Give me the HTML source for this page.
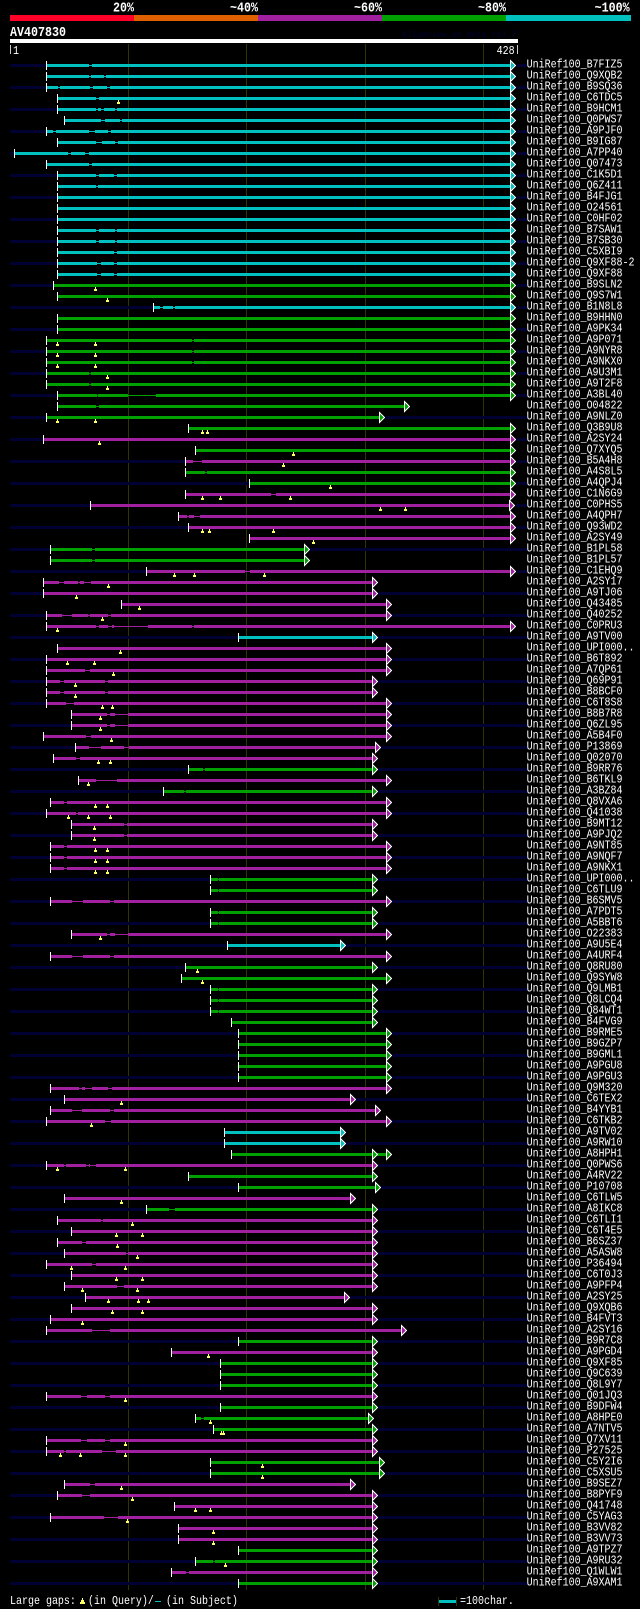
<!DOCTYPE html>
<html><head><meta charset="utf-8"><title>AV407830</title>
<style>
html,body{margin:0;padding:0;background:#000}
svg{display:block}
path{fill:none;stroke-width:3px}
.c{stroke:#00c0c0;color:#00c0c0}
.g{stroke:#00a000;color:#00a000}
.p{stroke:#a020a0;color:#a020a0}
.n{stroke:#003}
.t{stroke-width:1px}
.s{stroke:#fff;stroke-width:1px}
.a{fill:currentColor;stroke:#fff;stroke-width:1px;shape-rendering:crispEdges}
.m{fill:#ff6;stroke:none;shape-rendering:crispEdges}
text{font-family:"Liberation Mono",monospace;fill:#fff;stroke:none;white-space:pre}
.l{font-size:12px;transform:scale(.8333,1) translateY(-1px)}
.h{font-size:13.5px;font-weight:bold;transform:scale(.864,1)}
</style></head><body>
<svg xmlns="http://www.w3.org/2000/svg" width="640" height="1609" viewBox="0 0 640 1609">
<rect x="10" y="15" width="124" height="6" fill="#ff0028"/><rect x="134" y="15" width="124" height="6" fill="#e06000"/><rect x="258" y="15" width="124" height="6" fill="#a020a0"/><rect x="382" y="15" width="124" height="6" fill="#00a000"/><rect x="506" y="15" width="125" height="6" fill="#00c0c0"/>
<text class="h" x="130.8" y="11.7">20%</text><text class="h" x="266.2" y="11.7">~40%</text><text class="h" x="409.7" y="11.7">~60%</text><text class="h" x="553.2" y="11.7">~80%</text><text class="h" x="688.3" y="11.7">~100%</text>
<text class="h" x="11.6" y="36">AV407830</text>
<text x="401.7" y="37" style="font-size:8.33px;fill:#003">AlignView.pm Beta rel.7</text>
<rect x="10" y="39" width="508" height="4" fill="#fff"/>
<rect x="10" y="45" width="1" height="9" fill="#ccc"/><rect x="517" y="45" width="1" height="9" fill="#ccc"/>
<text class="l" x="15.6" y="55">1</text><text class="l" x="596" y="55">428</text>
<rect x="128" y="44" width="1" height="1546" fill="#330"/><rect x="246" y="44" width="1" height="1546" fill="#330"/><rect x="365" y="44" width="1" height="1546" fill="#330"/><rect x="483" y="44" width="1" height="1546" fill="#330"/>

<g class="c" transform="translate(0 65.5)"><path class="n" d="M10 0H46M517 0H527"/><path d="M47 0H89M92 0H510"/><path class="t" d="M89 0H92"/><path class="s" d="M46.5-4.5v9"/><path class="a" d="M510.5-5v10l5-5z"/><text class="l" x="632" y="3">UniRef100_B7FIZ5</text></g>
<g class="c" transform="translate(0 76.5)"><path d="M47 0H89M91 0H104M106 0H510"/><path class="t" d="M89 0H91M104 0H106"/><path class="s" d="M46.5-4.5v9"/><path class="a" d="M510.5-5v10l5-5z"/><text class="l" x="632" y="3">UniRef100_Q9XQB2</text></g>
<g class="c" transform="translate(0 87.5)"><path class="n" d="M10 0H46M517 0H527"/><path d="M47 0H58M60 0H90M93 0H107M110 0H510"/><path class="t" d="M58 0H60M90 0H93M107 0H110"/><path class="s" d="M46.5-4.5v9"/><path class="a" d="M510.5-5v10l5-5z"/><text class="l" x="632" y="3">UniRef100_B9SQ36</text></g>
<g class="c" transform="translate(0 98.5)"><path d="M58 0H96M99 0H510"/><path class="t" d="M96 0H99"/><path class="s" d="M57.5-4.5v9"/><path class="a" d="M510.5-5v10l5-5z"/><path class="m" d="M118 1.5h1v2h1v2h-3v-2h1z"/><text class="l" x="632" y="3">UniRef100_C6TDC5</text></g>
<g class="c" transform="translate(0 109.5)"><path class="n" d="M10 0H57M517 0H527"/><path d="M58 0H96M98 0H101M104 0H115M117 0H510"/><path class="t" d="M96 0H98M101 0H104M115 0H117"/><path class="s" d="M57.5-4.5v9"/><path class="a" d="M510.5-5v10l5-5z"/><text class="l" x="632" y="3">UniRef100_B9HCM1</text></g>
<g class="c" transform="translate(0 120.5)"><path d="M65 0H101M105 0H120M122 0H510"/><path class="t" d="M101 0H105M120 0H122"/><path class="s" d="M64.5-4.5v9"/><path class="a" d="M510.5-5v10l5-5z"/><text class="l" x="632" y="3">UniRef100_Q0PWS7</text></g>
<g class="c" transform="translate(0 131.5)"><path class="n" d="M10 0H46M517 0H527"/><path d="M47 0H53M56 0H89M95 0H108M111 0H510"/><path class="t" d="M53 0H56M89 0H95M108 0H111"/><path class="s" d="M46.5-4.5v9"/><path class="a" d="M510.5-5v10l5-5z"/><text class="l" x="632" y="3">UniRef100_A9PJF0</text></g>
<g class="c" transform="translate(0 142.5)"><path d="M58 0H96M102 0H115M118 0H510"/><path class="t" d="M96 0H102M115 0H118"/><path class="s" d="M57.5-4.5v9"/><path class="a" d="M510.5-5v10l5-5z"/><text class="l" x="632" y="3">UniRef100_B9IG87</text></g>
<g class="c" transform="translate(0 153.5)"><path class="n" d="M10 0H14M517 0H527"/><path d="M15 0H68M71 0H85M89 0H510"/><path class="t" d="M68 0H71M85 0H89"/><path class="s" d="M14.5-4.5v9"/><path class="a" d="M510.5-5v10l5-5z"/><text class="l" x="632" y="3">UniRef100_A7PP40</text></g>
<g class="c" transform="translate(0 164.5)"><path d="M47 0H89M92 0H510"/><path class="t" d="M89 0H92"/><path class="s" d="M46.5-4.5v9"/><path class="a" d="M510.5-5v10l5-5z"/><text class="l" x="632" y="3">UniRef100_Q07473</text></g>
<g class="c" transform="translate(0 175.5)"><path class="n" d="M10 0H57M517 0H527"/><path d="M58 0H96M99 0H114M117 0H510"/><path class="t" d="M96 0H99M114 0H117"/><path class="s" d="M57.5-4.5v9"/><path class="a" d="M510.5-5v10l5-5z"/><text class="l" x="632" y="3">UniRef100_C1K5D1</text></g>
<g class="c" transform="translate(0 186.5)"><path d="M58 0H96M98 0H510"/><path class="t" d="M96 0H98"/><path class="s" d="M57.5-4.5v9"/><path class="a" d="M510.5-5v10l5-5z"/><text class="l" x="632" y="3">UniRef100_Q6Z411</text></g>
<g class="c" transform="translate(0 197.5)"><path class="n" d="M10 0H57M517 0H527"/><path d="M58 0H510"/><path class="s" d="M57.5-4.5v9"/><path class="a" d="M510.5-5v10l5-5z"/><text class="l" x="632" y="3">UniRef100_B4FJG1</text></g>
<g class="c" transform="translate(0 208.5)"><path d="M58 0H510"/><path class="s" d="M57.5-4.5v9"/><path class="a" d="M510.5-5v10l5-5z"/><text class="l" x="632" y="3">UniRef100_O24561</text></g>
<g class="c" transform="translate(0 219.5)"><path class="n" d="M10 0H57M517 0H527"/><path d="M58 0H510"/><path class="s" d="M57.5-4.5v9"/><path class="a" d="M510.5-5v10l5-5z"/><text class="l" x="632" y="3">UniRef100_C0HF02</text></g>
<g class="c" transform="translate(0 230.5)"><path d="M58 0H96M99 0H115M117 0H510"/><path class="t" d="M96 0H99M115 0H117"/><path class="s" d="M57.5-4.5v9"/><path class="a" d="M510.5-5v10l5-5z"/><text class="l" x="632" y="3">UniRef100_B7SAW1</text></g>
<g class="c" transform="translate(0 241.5)"><path class="n" d="M10 0H57M517 0H527"/><path d="M58 0H96M99 0H115M117 0H510"/><path class="t" d="M96 0H99M115 0H117"/><path class="s" d="M57.5-4.5v9"/><path class="a" d="M510.5-5v10l5-5z"/><text class="l" x="632" y="3">UniRef100_B7SB30</text></g>
<g class="c" transform="translate(0 252.5)"><path d="M58 0H114M117 0H510"/><path class="t" d="M114 0H117"/><path class="s" d="M57.5-4.5v9"/><path class="a" d="M510.5-5v10l5-5z"/><text class="l" x="632" y="3">UniRef100_C5XBI9</text></g>
<g class="c" transform="translate(0 263.5)"><path class="n" d="M10 0H57M517 0H527"/><path d="M58 0H97M101 0H114M117 0H510"/><path class="t" d="M97 0H101M114 0H117"/><path class="s" d="M57.5-4.5v9"/><path class="a" d="M510.5-5v10l5-5z"/><text class="l" x="632" y="3">UniRef100_Q9XF88-2</text></g>
<g class="c" transform="translate(0 274.5)"><path d="M58 0H97M101 0H114M117 0H510"/><path class="t" d="M97 0H101M114 0H117"/><path class="s" d="M57.5-4.5v9"/><path class="a" d="M510.5-5v10l5-5z"/><text class="l" x="632" y="3">UniRef100_Q9XF88</text></g>
<g class="g" transform="translate(0 285.5)"><path class="n" d="M10 0H53M517 0H527"/><path d="M54 0H510"/><path class="s" d="M53.5-4.5v9"/><path class="a" d="M510.5-5v10l5-5z"/><path class="m" d="M95 1.5h1v2h1v2h-3v-2h1z"/><text class="l" x="632" y="3">UniRef100_B9SLN2</text></g>
<g class="g" transform="translate(0 296.5)"><path d="M58 0H510"/><path class="s" d="M57.5-4.5v9"/><path class="a" d="M510.5-5v10l5-5z"/><path class="m" d="M107 1.5h1v2h1v2h-3v-2h1z"/><text class="l" x="632" y="3">UniRef100_Q9S7W1</text></g>
<g class="c" transform="translate(0 307.5)"><path class="n" d="M10 0H153M517 0H527"/><path d="M154 0H160M163 0H173M175 0H510"/><path class="t" d="M160 0H163M173 0H175"/><path class="s" d="M153.5-4.5v9"/><path class="a" d="M510.5-5v10l5-5z"/><text class="l" x="632" y="3">UniRef100_B1N8L8</text></g>
<g class="g" transform="translate(0 318.5)"><path d="M58 0H510"/><path class="s" d="M57.5-4.5v9"/><path class="a" d="M510.5-5v10l5-5z"/><text class="l" x="632" y="3">UniRef100_B9HHN0</text></g>
<g class="g" transform="translate(0 329.5)"><path class="n" d="M10 0H57M517 0H527"/><path d="M58 0H510"/><path class="s" d="M57.5-4.5v9"/><path class="a" d="M510.5-5v10l5-5z"/><text class="l" x="632" y="3">UniRef100_A9PK34</text></g>
<g class="g" transform="translate(0 340.5)"><path d="M47 0H192M194 0H510"/><path class="t" d="M192 0H194"/><path class="s" d="M46.5-4.5v9"/><path class="a" d="M510.5-5v10l5-5z"/><path class="m" d="M57 1.5h1v2h1v2h-3v-2h1zM95 1.5h1v2h1v2h-3v-2h1z"/><text class="l" x="632" y="3">UniRef100_A9P071</text></g>
<g class="g" transform="translate(0 351.5)"><path class="n" d="M10 0H46M517 0H527"/><path d="M47 0H192M194 0H510"/><path class="t" d="M192 0H194"/><path class="s" d="M46.5-4.5v9"/><path class="a" d="M510.5-5v10l5-5z"/><path class="m" d="M57 1.5h1v2h1v2h-3v-2h1zM95 1.5h1v2h1v2h-3v-2h1z"/><text class="l" x="632" y="3">UniRef100_A9NYR8</text></g>
<g class="g" transform="translate(0 362.5)"><path d="M47 0H192M194 0H510"/><path class="t" d="M192 0H194"/><path class="s" d="M46.5-4.5v9"/><path class="a" d="M510.5-5v10l5-5z"/><path class="m" d="M57 1.5h1v2h1v2h-3v-2h1zM95 1.5h1v2h1v2h-3v-2h1z"/><text class="l" x="632" y="3">UniRef100_A9NKX0</text></g>
<g class="g" transform="translate(0 373.5)"><path class="n" d="M10 0H46M517 0H527"/><path d="M47 0H89M91 0H510"/><path class="t" d="M89 0H91"/><path class="s" d="M46.5-4.5v9"/><path class="a" d="M510.5-5v10l5-5z"/><path class="m" d="M107 1.5h1v2h1v2h-3v-2h1z"/><text class="l" x="632" y="3">UniRef100_A9U3M1</text></g>
<g class="g" transform="translate(0 384.5)"><path d="M47 0H89M91 0H510"/><path class="t" d="M89 0H91"/><path class="s" d="M46.5-4.5v9"/><path class="a" d="M510.5-5v10l5-5z"/><path class="m" d="M107 1.5h1v2h1v2h-3v-2h1z"/><text class="l" x="632" y="3">UniRef100_A9T2F8</text></g>
<g class="g" transform="translate(0 395.5)"><path class="n" d="M10 0H57M517 0H527"/><path d="M58 0H97M98 0H128M156 0H510"/><path class="t" d="M97 0H98M128 0H156"/><path class="s" d="M57.5-4.5v9"/><path class="a" d="M510.5-5v10l5-5z"/><text class="l" x="632" y="3">UniRef100_A3BL40</text></g>
<g class="g" transform="translate(0 406.5)"><path d="M58 0H96M99 0H404"/><path class="t" d="M96 0H99"/><path class="s" d="M57.5-4.5v9"/><path class="a" d="M404.5-5v10l5-5z"/><text class="l" x="632" y="3">UniRef100_O04822</text></g>
<g class="g" transform="translate(0 417.5)"><path class="n" d="M10 0H46M385 0H527"/><path d="M47 0H379"/><path class="s" d="M46.5-4.5v9"/><path class="a" d="M379.5-5v10l5-5z"/><path class="m" d="M57 1.5h1v2h1v2h-3v-2h1zM95 1.5h1v2h1v2h-3v-2h1z"/><text class="l" x="632" y="3">UniRef100_A9NLZ0</text></g>
<g class="g" transform="translate(0 428.5)"><path d="M189 0H510"/><path class="s" d="M188.5-4.5v9"/><path class="a" d="M510.5-5v10l5-5z"/><path class="m" d="M202 1.5h1v2h1v2h-3v-2h1zM207 1.5h1v2h1v2h-3v-2h1z"/><text class="l" x="632" y="3">UniRef100_Q3B9U8</text></g>
<g class="p" transform="translate(0 439.5)"><path class="n" d="M10 0H43M517 0H527"/><path d="M44 0H510"/><path class="s" d="M43.5-4.5v9"/><path class="a" d="M510.5-5v10l5-5z"/><path class="m" d="M99 1.5h1v2h1v2h-3v-2h1z"/><text class="l" x="632" y="3">UniRef100_A2SY24</text></g>
<g class="g" transform="translate(0 450.5)"><path d="M196 0H510"/><path class="s" d="M195.5-4.5v9"/><path class="a" d="M510.5-5v10l5-5z"/><path class="m" d="M293 1.5h1v2h1v2h-3v-2h1z"/><text class="l" x="632" y="3">UniRef100_Q7XYQ5</text></g>
<g class="p" transform="translate(0 461.5)"><path class="n" d="M10 0H185M517 0H527"/><path d="M186 0H193M202 0H510"/><path class="t" d="M193 0H202"/><path class="s" d="M185.5-4.5v9"/><path class="a" d="M510.5-5v10l5-5z"/><path class="m" d="M283 1.5h1v2h1v2h-3v-2h1z"/><text class="l" x="632" y="3">UniRef100_B5A4H8</text></g>
<g class="g" transform="translate(0 472.5)"><path d="M186 0H205M207 0H510"/><path class="t" d="M205 0H207"/><path class="s" d="M185.5-4.5v9"/><path class="a" d="M510.5-5v10l5-5z"/><text class="l" x="632" y="3">UniRef100_A4S8L5</text></g>
<g class="g" transform="translate(0 483.5)"><path class="n" d="M10 0H249M517 0H527"/><path d="M250 0H510"/><path class="s" d="M249.5-4.5v9"/><path class="a" d="M510.5-5v10l5-5z"/><path class="m" d="M330 1.5h1v2h1v2h-3v-2h1z"/><text class="l" x="632" y="3">UniRef100_A4QPJ4</text></g>
<g class="p" transform="translate(0 494.5)"><path d="M186 0H271M276 0H510"/><path class="t" d="M271 0H276"/><path class="s" d="M185.5-4.5v9"/><path class="a" d="M510.5-5v10l5-5z"/><path class="m" d="M202 1.5h1v2h1v2h-3v-2h1zM220 1.5h1v2h1v2h-3v-2h1zM290 1.5h1v2h1v2h-3v-2h1z"/><text class="l" x="632" y="3">UniRef100_C1N6G9</text></g>
<g class="p" transform="translate(0 505.5)"><path class="n" d="M10 0H90M516 0H527"/><path d="M91 0H509"/><path class="s" d="M90.5-4.5v9"/><path class="a" d="M509.5-5v10l5-5z"/><path class="m" d="M380 1.5h1v2h1v2h-3v-2h1zM405 1.5h1v2h1v2h-3v-2h1z"/><text class="l" x="632" y="3">UniRef100_C0PHS5</text></g>
<g class="p" transform="translate(0 516.5)"><path d="M179 0H187M189 0H194M200 0H510"/><path class="t" d="M187 0H189M194 0H200"/><path class="s" d="M178.5-4.5v9"/><path class="a" d="M510.5-5v10l5-5z"/><text class="l" x="632" y="3">UniRef100_A4QPH7</text></g>
<g class="p" transform="translate(0 527.5)"><path class="n" d="M10 0H188M517 0H527"/><path d="M189 0H510"/><path class="s" d="M188.5-4.5v9"/><path class="a" d="M510.5-5v10l5-5z"/><path class="m" d="M202 1.5h1v2h1v2h-3v-2h1zM209 1.5h1v2h1v2h-3v-2h1zM273 1.5h1v2h1v2h-3v-2h1z"/><text class="l" x="632" y="3">UniRef100_Q93WD2</text></g>
<g class="p" transform="translate(0 538.5)"><path d="M250 0H510"/><path class="s" d="M249.5-4.5v9"/><path class="a" d="M510.5-5v10l5-5z"/><path class="m" d="M313 1.5h1v2h1v2h-3v-2h1z"/><text class="l" x="632" y="3">UniRef100_A2SY49</text></g>
<g class="g" transform="translate(0 549.5)"><path class="n" d="M10 0H50M310 0H527"/><path d="M51 0H92M95 0H304"/><path class="t" d="M92 0H95"/><path class="s" d="M50.5-4.5v9"/><path class="a" d="M304.5-5v10l5-5z"/><text class="l" x="632" y="3">UniRef100_B1PL58</text></g>
<g class="g" transform="translate(0 560.5)"><path d="M51 0H92M95 0H304"/><path class="t" d="M92 0H95"/><path class="s" d="M50.5-4.5v9"/><path class="a" d="M304.5-5v10l5-5z"/><text class="l" x="632" y="3">UniRef100_B1PL57</text></g>
<g class="p" transform="translate(0 571.5)"><path class="n" d="M10 0H146M517 0H527"/><path d="M147 0H245M250 0H510"/><path class="t" d="M245 0H250"/><path class="s" d="M146.5-4.5v9"/><path class="a" d="M510.5-5v10l5-5z"/><path class="m" d="M174 1.5h1v2h1v2h-3v-2h1zM194 1.5h1v2h1v2h-3v-2h1zM264 1.5h1v2h1v2h-3v-2h1z"/><text class="l" x="632" y="3">UniRef100_C1EHQ9</text></g>
<g class="p" transform="translate(0 582.5)"><path d="M44 0H59M64 0H78M80 0H84M91 0H372"/><path class="t" d="M59 0H64M78 0H80M84 0H91"/><path class="s" d="M43.5-4.5v9"/><path class="a" d="M372.5-5v10l5-5z"/><path class="m" d="M108 1.5h1v2h1v2h-3v-2h1z"/><text class="l" x="632" y="3">UniRef100_A2SY17</text></g>
<g class="p" transform="translate(0 593.5)"><path class="n" d="M10 0H43M378 0H527"/><path d="M44 0H372"/><path class="s" d="M43.5-4.5v9"/><path class="a" d="M372.5-5v10l5-5z"/><path class="m" d="M76 1.5h1v2h1v2h-3v-2h1z"/><text class="l" x="632" y="3">UniRef100_A9TJ06</text></g>
<g class="p" transform="translate(0 604.5)"><path d="M122 0H386"/><path class="s" d="M121.5-4.5v9"/><path class="a" d="M386.5-5v10l5-5z"/><path class="m" d="M139 1.5h1v2h1v2h-3v-2h1z"/><text class="l" x="632" y="3">UniRef100_Q43485</text></g>
<g class="p" transform="translate(0 615.5)"><path class="n" d="M10 0H46M392 0H527"/><path d="M47 0H62M72 0H88M90 0H108M111 0H386"/><path class="t" d="M62 0H72M88 0H90M108 0H111"/><path class="s" d="M46.5-4.5v9"/><path class="a" d="M386.5-5v10l5-5z"/><path class="m" d="M102 1.5h1v2h1v2h-3v-2h1z"/><text class="l" x="632" y="3">UniRef100_Q40252</text></g>
<g class="p" transform="translate(0 626.5)"><path d="M47 0H96M99 0H108M112 0H114M148 0H192M194 0H510"/><path class="t" d="M96 0H99M108 0H112M114 0H148M192 0H194"/><path class="s" d="M46.5-4.5v9"/><path class="a" d="M510.5-5v10l5-5z"/><path class="m" d="M57 1.5h1v2h1v2h-3v-2h1z"/><text class="l" x="632" y="3">UniRef100_C0PRU3</text></g>
<g class="c" transform="translate(0 637.5)"><path class="n" d="M10 0H238M378 0H527"/><path d="M239 0H372"/><path class="s" d="M238.5-4.5v9"/><path class="a" d="M372.5-5v10l5-5z"/><text class="l" x="632" y="3">UniRef100_A9TV00</text></g>
<g class="p" transform="translate(0 648.5)"><path d="M58 0H386"/><path class="s" d="M57.5-4.5v9"/><path class="a" d="M386.5-5v10l5-5z"/><path class="m" d="M120 1.5h1v2h1v2h-3v-2h1z"/><text class="l" x="632" y="3">UniRef100_UPI000..</text></g>
<g class="p" transform="translate(0 659.5)"><path class="n" d="M10 0H46M392 0H527"/><path d="M47 0H386"/><path class="s" d="M46.5-4.5v9"/><path class="a" d="M386.5-5v10l5-5z"/><path class="m" d="M67 1.5h1v2h1v2h-3v-2h1zM94 1.5h1v2h1v2h-3v-2h1z"/><text class="l" x="632" y="3">UniRef100_B6T892</text></g>
<g class="p" transform="translate(0 670.5)"><path d="M47 0H85M90 0H386"/><path class="t" d="M85 0H90"/><path class="s" d="M46.5-4.5v9"/><path class="a" d="M386.5-5v10l5-5z"/><path class="m" d="M113 1.5h1v2h1v2h-3v-2h1z"/><text class="l" x="632" y="3">UniRef100_A7QP61</text></g>
<g class="p" transform="translate(0 681.5)"><path class="n" d="M10 0H46M378 0H527"/><path d="M47 0H60M64 0H105M108 0H372"/><path class="t" d="M60 0H64M105 0H108"/><path class="s" d="M46.5-4.5v9"/><path class="a" d="M372.5-5v10l5-5z"/><path class="m" d="M75 1.5h1v2h1v2h-3v-2h1z"/><text class="l" x="632" y="3">UniRef100_Q69P91</text></g>
<g class="p" transform="translate(0 692.5)"><path d="M47 0H60M64 0H105M108 0H372"/><path class="t" d="M60 0H64M105 0H108"/><path class="s" d="M46.5-4.5v9"/><path class="a" d="M372.5-5v10l5-5z"/><path class="m" d="M75 1.5h1v2h1v2h-3v-2h1z"/><text class="l" x="632" y="3">UniRef100_B8BCF0</text></g>
<g class="p" transform="translate(0 703.5)"><path class="n" d="M10 0H46M392 0H527"/><path d="M47 0H66M74 0H386"/><path class="t" d="M66 0H74"/><path class="s" d="M46.5-4.5v9"/><path class="a" d="M386.5-5v10l5-5z"/><path class="m" d="M102 1.5h1v2h1v2h-3v-2h1zM112 1.5h1v2h1v2h-3v-2h1z"/><text class="l" x="632" y="3">UniRef100_C6T8S8</text></g>
<g class="p" transform="translate(0 714.5)"><path d="M72 0H107M110 0H115M128 0H386"/><path class="t" d="M107 0H110M115 0H128"/><path class="s" d="M71.5-4.5v9"/><path class="a" d="M386.5-5v10l5-5z"/><path class="m" d="M100 1.5h1v2h1v2h-3v-2h1z"/><text class="l" x="632" y="3">UniRef100_B8B7R8</text></g>
<g class="p" transform="translate(0 725.5)"><path class="n" d="M10 0H71M392 0H527"/><path d="M72 0H107M110 0H115M128 0H386"/><path class="t" d="M107 0H110M115 0H128"/><path class="s" d="M71.5-4.5v9"/><path class="a" d="M386.5-5v10l5-5z"/><path class="m" d="M100 1.5h1v2h1v2h-3v-2h1z"/><text class="l" x="632" y="3">UniRef100_Q6ZL95</text></g>
<g class="p" transform="translate(0 736.5)"><path d="M44 0H86M91 0H386"/><path class="t" d="M86 0H91"/><path class="s" d="M43.5-4.5v9"/><path class="a" d="M386.5-5v10l5-5z"/><path class="m" d="M111 1.5h1v2h1v2h-3v-2h1z"/><text class="l" x="632" y="3">UniRef100_A5B4F0</text></g>
<g class="p" transform="translate(0 747.5)"><path class="n" d="M10 0H75M381 0H527"/><path d="M76 0H89M101 0H124M129 0H375"/><path class="t" d="M89 0H101M124 0H129"/><path class="s" d="M75.5-4.5v9"/><path class="a" d="M375.5-5v10l5-5z"/><text class="l" x="632" y="3">UniRef100_P13869</text></g>
<g class="p" transform="translate(0 758.5)"><path d="M54 0H76M80 0H372"/><path class="t" d="M76 0H80"/><path class="s" d="M53.5-4.5v9"/><path class="a" d="M372.5-5v10l5-5z"/><path class="m" d="M98 1.5h1v2h1v2h-3v-2h1zM110 1.5h1v2h1v2h-3v-2h1z"/><text class="l" x="632" y="3">UniRef100_Q02070</text></g>
<g class="g" transform="translate(0 769.5)"><path class="n" d="M10 0H188M378 0H527"/><path d="M189 0H203M205 0H372"/><path class="t" d="M203 0H205"/><path class="s" d="M188.5-4.5v9"/><path class="a" d="M372.5-5v10l5-5z"/><text class="l" x="632" y="3">UniRef100_B9RR76</text></g>
<g class="p" transform="translate(0 780.5)"><path d="M79 0H96M117 0H386"/><path class="t" d="M96 0H117"/><path class="s" d="M78.5-4.5v9"/><path class="a" d="M386.5-5v10l5-5z"/><path class="m" d="M88 1.5h1v2h1v2h-3v-2h1z"/><text class="l" x="632" y="3">UniRef100_B6TKL9</text></g>
<g class="g" transform="translate(0 791.5)"><path class="n" d="M10 0H163M378 0H527"/><path d="M164 0H184M186 0H372"/><path class="t" d="M184 0H186"/><path class="s" d="M163.5-4.5v9"/><path class="a" d="M372.5-5v10l5-5z"/><text class="l" x="632" y="3">UniRef100_A3BZ84</text></g>
<g class="p" transform="translate(0 802.5)"><path d="M51 0H64M67 0H386"/><path class="t" d="M64 0H67"/><path class="s" d="M50.5-4.5v9"/><path class="a" d="M386.5-5v10l5-5z"/><path class="m" d="M95 1.5h1v2h1v2h-3v-2h1zM107 1.5h1v2h1v2h-3v-2h1z"/><text class="l" x="632" y="3">UniRef100_Q8VXA6</text></g>
<g class="p" transform="translate(0 813.5)"><path class="n" d="M10 0H46M392 0H527"/><path d="M47 0H76M78 0H386"/><path class="t" d="M76 0H78"/><path class="s" d="M46.5-4.5v9"/><path class="a" d="M386.5-5v10l5-5z"/><path class="m" d="M68 1.5h1v2h1v2h-3v-2h1zM88 1.5h1v2h1v2h-3v-2h1zM110 1.5h1v2h1v2h-3v-2h1z"/><text class="l" x="632" y="3">UniRef100_Q41038</text></g>
<g class="p" transform="translate(0 824.5)"><path d="M72 0H124M127 0H372"/><path class="t" d="M124 0H127"/><path class="s" d="M71.5-4.5v9"/><path class="a" d="M372.5-5v10l5-5z"/><path class="m" d="M94 1.5h1v2h1v2h-3v-2h1z"/><text class="l" x="632" y="3">UniRef100_B9MT12</text></g>
<g class="p" transform="translate(0 835.5)"><path class="n" d="M10 0H71M378 0H527"/><path d="M72 0H124M127 0H372"/><path class="t" d="M124 0H127"/><path class="s" d="M71.5-4.5v9"/><path class="a" d="M372.5-5v10l5-5z"/><path class="m" d="M94 1.5h1v2h1v2h-3v-2h1z"/><text class="l" x="632" y="3">UniRef100_A9PJQ2</text></g>
<g class="p" transform="translate(0 846.5)"><path d="M51 0H64M67 0H386"/><path class="t" d="M64 0H67"/><path class="s" d="M50.5-4.5v9"/><path class="a" d="M386.5-5v10l5-5z"/><path class="m" d="M95 1.5h1v2h1v2h-3v-2h1zM107 1.5h1v2h1v2h-3v-2h1z"/><text class="l" x="632" y="3">UniRef100_A9NT85</text></g>
<g class="p" transform="translate(0 857.5)"><path class="n" d="M10 0H50M392 0H527"/><path d="M51 0H64M67 0H386"/><path class="t" d="M64 0H67"/><path class="s" d="M50.5-4.5v9"/><path class="a" d="M386.5-5v10l5-5z"/><path class="m" d="M95 1.5h1v2h1v2h-3v-2h1zM107 1.5h1v2h1v2h-3v-2h1z"/><text class="l" x="632" y="3">UniRef100_A9NQF7</text></g>
<g class="p" transform="translate(0 868.5)"><path d="M51 0H64M67 0H386"/><path class="t" d="M64 0H67"/><path class="s" d="M50.5-4.5v9"/><path class="a" d="M386.5-5v10l5-5z"/><path class="m" d="M95 1.5h1v2h1v2h-3v-2h1zM107 1.5h1v2h1v2h-3v-2h1z"/><text class="l" x="632" y="3">UniRef100_A9NKX1</text></g>
<g class="g" transform="translate(0 879.5)"><path class="n" d="M10 0H210M378 0H527"/><path d="M211 0H218M219 0H372"/><path class="t" d="M218 0H219"/><path class="s" d="M210.5-4.5v9"/><path class="a" d="M372.5-5v10l5-5z"/><text class="l" x="632" y="3">UniRef100_UPI000..</text></g>
<g class="g" transform="translate(0 890.5)"><path d="M211 0H218M219 0H372"/><path class="t" d="M218 0H219"/><path class="s" d="M210.5-4.5v9"/><path class="a" d="M372.5-5v10l5-5z"/><text class="l" x="632" y="3">UniRef100_C6TLU9</text></g>
<g class="p" transform="translate(0 901.5)"><path class="n" d="M10 0H50M392 0H527"/><path d="M51 0H72M83 0H110M114 0H386"/><path class="t" d="M72 0H83M110 0H114"/><path class="s" d="M50.5-4.5v9"/><path class="a" d="M386.5-5v10l5-5z"/><text class="l" x="632" y="3">UniRef100_B6SMV5</text></g>
<g class="g" transform="translate(0 912.5)"><path d="M211 0H218M219 0H372"/><path class="t" d="M218 0H219"/><path class="s" d="M210.5-4.5v9"/><path class="a" d="M372.5-5v10l5-5z"/><text class="l" x="632" y="3">UniRef100_A7PDT5</text></g>
<g class="g" transform="translate(0 923.5)"><path class="n" d="M10 0H210M378 0H527"/><path d="M211 0H218M219 0H372"/><path class="t" d="M218 0H219"/><path class="s" d="M210.5-4.5v9"/><path class="a" d="M372.5-5v10l5-5z"/><text class="l" x="632" y="3">UniRef100_A5BBT6</text></g>
<g class="p" transform="translate(0 934.5)"><path d="M72 0H107M110 0H115M128 0H386"/><path class="t" d="M107 0H110M115 0H128"/><path class="s" d="M71.5-4.5v9"/><path class="a" d="M386.5-5v10l5-5z"/><path class="m" d="M100 1.5h1v2h1v2h-3v-2h1z"/><text class="l" x="632" y="3">UniRef100_O22383</text></g>
<g class="c" transform="translate(0 945.5)"><path class="n" d="M10 0H227M346 0H527"/><path d="M228 0H340"/><path class="s" d="M227.5-4.5v9"/><path class="a" d="M340.5-5v10l5-5z"/><text class="l" x="632" y="3">UniRef100_A9U5E4</text></g>
<g class="p" transform="translate(0 956.5)"><path d="M51 0H72M83 0H110M114 0H386"/><path class="t" d="M72 0H83M110 0H114"/><path class="s" d="M50.5-4.5v9"/><path class="a" d="M386.5-5v10l5-5z"/><text class="l" x="632" y="3">UniRef100_A4URF4</text></g>
<g class="g" transform="translate(0 967.5)"><path class="n" d="M10 0H185M378 0H527"/><path d="M186 0H372"/><path class="s" d="M185.5-4.5v9"/><path class="a" d="M372.5-5v10l5-5z"/><path class="m" d="M197 1.5h1v2h1v2h-3v-2h1z"/><text class="l" x="632" y="3">UniRef100_Q8RU80</text></g>
<g class="g" transform="translate(0 978.5)"><path d="M182 0H386"/><path class="s" d="M181.5-4.5v9"/><path class="a" d="M386.5-5v10l5-5z"/><path class="m" d="M202 1.5h1v2h1v2h-3v-2h1z"/><text class="l" x="632" y="3">UniRef100_Q9SYW8</text></g>
<g class="g" transform="translate(0 989.5)"><path class="n" d="M10 0H210M378 0H527"/><path d="M211 0H218M219 0H372"/><path class="t" d="M218 0H219"/><path class="s" d="M210.5-4.5v9"/><path class="a" d="M372.5-5v10l5-5z"/><text class="l" x="632" y="3">UniRef100_Q9LMB1</text></g>
<g class="g" transform="translate(0 1000.5)"><path d="M211 0H218M219 0H372"/><path class="t" d="M218 0H219"/><path class="s" d="M210.5-4.5v9"/><path class="a" d="M372.5-5v10l5-5z"/><text class="l" x="632" y="3">UniRef100_Q8LCQ4</text></g>
<g class="g" transform="translate(0 1011.5)"><path class="n" d="M10 0H210M378 0H527"/><path d="M211 0H218M219 0H372"/><path class="t" d="M218 0H219"/><path class="s" d="M210.5-4.5v9"/><path class="a" d="M372.5-5v10l5-5z"/><text class="l" x="632" y="3">UniRef100_Q84WT1</text></g>
<g class="g" transform="translate(0 1022.5)"><path d="M232 0H372"/><path class="s" d="M231.5-4.5v9"/><path class="a" d="M372.5-5v10l5-5z"/><text class="l" x="632" y="3">UniRef100_B4FVG9</text></g>
<g class="g" transform="translate(0 1033.5)"><path class="n" d="M10 0H238M392 0H527"/><path d="M239 0H386"/><path class="s" d="M238.5-4.5v9"/><path class="a" d="M386.5-5v10l5-5z"/><text class="l" x="632" y="3">UniRef100_B9RME5</text></g>
<g class="g" transform="translate(0 1044.5)"><path d="M239 0H386"/><path class="s" d="M238.5-4.5v9"/><path class="a" d="M386.5-5v10l5-5z"/><text class="l" x="632" y="3">UniRef100_B9GZP7</text></g>
<g class="g" transform="translate(0 1055.5)"><path class="n" d="M10 0H238M392 0H527"/><path d="M239 0H386"/><path class="s" d="M238.5-4.5v9"/><path class="a" d="M386.5-5v10l5-5z"/><text class="l" x="632" y="3">UniRef100_B9GML1</text></g>
<g class="g" transform="translate(0 1066.5)"><path d="M239 0H386"/><path class="s" d="M238.5-4.5v9"/><path class="a" d="M386.5-5v10l5-5z"/><text class="l" x="632" y="3">UniRef100_A9PGU8</text></g>
<g class="g" transform="translate(0 1077.5)"><path class="n" d="M10 0H238M392 0H527"/><path d="M239 0H386"/><path class="s" d="M238.5-4.5v9"/><path class="a" d="M386.5-5v10l5-5z"/><text class="l" x="632" y="3">UniRef100_A9PGU3</text></g>
<g class="p" transform="translate(0 1088.5)"><path d="M51 0H79M82 0H85M92 0H108M112 0H386"/><path class="t" d="M79 0H82M85 0H92M108 0H112"/><path class="s" d="M50.5-4.5v9"/><path class="a" d="M386.5-5v10l5-5z"/><text class="l" x="632" y="3">UniRef100_Q9M320</text></g>
<g class="p" transform="translate(0 1099.5)"><path class="n" d="M10 0H64M356 0H527"/><path d="M65 0H350"/><path class="s" d="M64.5-4.5v9"/><path class="a" d="M350.5-5v10l5-5z"/><path class="m" d="M121 1.5h1v2h1v2h-3v-2h1z"/><text class="l" x="632" y="3">UniRef100_C6TEX2</text></g>
<g class="p" transform="translate(0 1110.5)"><path d="M51 0H72M82 0H110M114 0H375"/><path class="t" d="M72 0H82M110 0H114"/><path class="s" d="M50.5-4.5v9"/><path class="a" d="M375.5-5v10l5-5z"/><text class="l" x="632" y="3">UniRef100_B4YYB1</text></g>
<g class="p" transform="translate(0 1121.5)"><path class="n" d="M10 0H46M392 0H527"/><path d="M47 0H105M111 0H386"/><path class="t" d="M105 0H111"/><path class="s" d="M46.5-4.5v9"/><path class="a" d="M386.5-5v10l5-5z"/><path class="m" d="M91 1.5h1v2h1v2h-3v-2h1z"/><text class="l" x="632" y="3">UniRef100_C6TKB2</text></g>
<g class="c" transform="translate(0 1132.5)"><path d="M225 0H340"/><path class="s" d="M224.5-4.5v9"/><path class="a" d="M340.5-5v10l5-5z"/><text class="l" x="632" y="3">UniRef100_A9TV02</text></g>
<g class="c" transform="translate(0 1143.5)"><path class="n" d="M10 0H224M346 0H527"/><path d="M225 0H340"/><path class="s" d="M224.5-4.5v9"/><path class="a" d="M340.5-5v10l5-5z"/><text class="l" x="632" y="3">UniRef100_A9RW10</text></g>
<g class="g" transform="translate(0 1154.5)"><path d="M232 0H386"/><path class="s" d="M231.5-4.5v9"/><path class="a" d="M372.5-5v10l5-5z"/><path class="a" d="M386.5-5v10l5-5z"/><text class="l" x="632" y="3">UniRef100_A8HPH1</text></g>
<g class="p" transform="translate(0 1165.5)"><path class="n" d="M10 0H46M378 0H527"/><path d="M47 0H64M66 0H86M89 0H90M96 0H372"/><path class="t" d="M64 0H66M86 0H96"/><path class="s" d="M46.5-4.5v9"/><path class="a" d="M372.5-5v10l5-5z"/><path class="m" d="M57 1.5h1v2h1v2h-3v-2h1zM125 1.5h1v2h1v2h-3v-2h1z"/><text class="l" x="632" y="3">UniRef100_Q0PWS6</text></g>
<g class="g" transform="translate(0 1176.5)"><path d="M189 0H372"/><path class="s" d="M188.5-4.5v9"/><path class="a" d="M372.5-5v10l5-5z"/><text class="l" x="632" y="3">UniRef100_A4RV22</text></g>
<g class="g" transform="translate(0 1187.5)"><path class="n" d="M10 0H238M381 0H527"/><path d="M239 0H375"/><path class="s" d="M238.5-4.5v9"/><path class="a" d="M375.5-5v10l5-5z"/><text class="l" x="632" y="3">UniRef100_P10708</text></g>
<g class="p" transform="translate(0 1198.5)"><path d="M65 0H350"/><path class="s" d="M64.5-4.5v9"/><path class="a" d="M350.5-5v10l5-5z"/><path class="m" d="M121 1.5h1v2h1v2h-3v-2h1z"/><text class="l" x="632" y="3">UniRef100_C6TLW5</text></g>
<g class="g" transform="translate(0 1209.5)"><path class="n" d="M10 0H146M378 0H527"/><path d="M147 0H169M175 0H372"/><path class="t" d="M169 0H175"/><path class="s" d="M146.5-4.5v9"/><path class="a" d="M372.5-5v10l5-5z"/><text class="l" x="632" y="3">UniRef100_A8IKC8</text></g>
<g class="p" transform="translate(0 1220.5)"><path d="M58 0H101M103 0H372"/><path class="t" d="M101 0H103"/><path class="s" d="M57.5-4.5v9"/><path class="a" d="M372.5-5v10l5-5z"/><path class="m" d="M132 1.5h1v2h1v2h-3v-2h1z"/><text class="l" x="632" y="3">UniRef100_C6TLI1</text></g>
<g class="p" transform="translate(0 1231.5)"><path class="n" d="M10 0H71M378 0H527"/><path d="M72 0H372"/><path class="s" d="M71.5-4.5v9"/><path class="a" d="M372.5-5v10l5-5z"/><path class="m" d="M116 1.5h1v2h1v2h-3v-2h1zM142 1.5h1v2h1v2h-3v-2h1z"/><text class="l" x="632" y="3">UniRef100_C6T4E5</text></g>
<g class="p" transform="translate(0 1242.5)"><path d="M58 0H82M86 0H372"/><path class="t" d="M82 0H86"/><path class="s" d="M57.5-4.5v9"/><path class="a" d="M372.5-5v10l5-5z"/><path class="m" d="M117 1.5h1v2h1v2h-3v-2h1z"/><text class="l" x="632" y="3">UniRef100_B6SZ37</text></g>
<g class="p" transform="translate(0 1253.5)"><path class="n" d="M10 0H64M378 0H527"/><path d="M65 0H126M128 0H372"/><path class="t" d="M126 0H128"/><path class="s" d="M64.5-4.5v9"/><path class="a" d="M372.5-5v10l5-5z"/><path class="m" d="M137 1.5h1v2h1v2h-3v-2h1z"/><text class="l" x="632" y="3">UniRef100_A5ASW8</text></g>
<g class="p" transform="translate(0 1264.5)"><path d="M47 0H92M96 0H372"/><path class="t" d="M92 0H96"/><path class="s" d="M46.5-4.5v9"/><path class="a" d="M372.5-5v10l5-5z"/><path class="m" d="M71 1.5h1v2h1v2h-3v-2h1zM125 1.5h1v2h1v2h-3v-2h1z"/><text class="l" x="632" y="3">UniRef100_P36494</text></g>
<g class="p" transform="translate(0 1275.5)"><path class="n" d="M10 0H71M378 0H527"/><path d="M72 0H372"/><path class="s" d="M71.5-4.5v9"/><path class="a" d="M372.5-5v10l5-5z"/><path class="m" d="M116 1.5h1v2h1v2h-3v-2h1zM142 1.5h1v2h1v2h-3v-2h1z"/><text class="l" x="632" y="3">UniRef100_C6T0J3</text></g>
<g class="p" transform="translate(0 1286.5)"><path d="M65 0H117M124 0H372"/><path class="t" d="M117 0H124"/><path class="s" d="M64.5-4.5v9"/><path class="a" d="M372.5-5v10l5-5z"/><path class="m" d="M82 1.5h1v2h1v2h-3v-2h1zM137 1.5h1v2h1v2h-3v-2h1z"/><text class="l" x="632" y="3">UniRef100_A9PFP4</text></g>
<g class="p" transform="translate(0 1297.5)"><path class="n" d="M10 0H85M350 0H527"/><path d="M86 0H344"/><path class="s" d="M85.5-4.5v9"/><path class="a" d="M344.5-5v10l5-5z"/><path class="m" d="M108 1.5h1v2h1v2h-3v-2h1zM138 1.5h1v2h1v2h-3v-2h1zM148 1.5h1v2h1v2h-3v-2h1z"/><text class="l" x="632" y="3">UniRef100_A2SY25</text></g>
<g class="p" transform="translate(0 1308.5)"><path d="M72 0H372"/><path class="s" d="M71.5-4.5v9"/><path class="a" d="M372.5-5v10l5-5z"/><path class="m" d="M112 1.5h1v2h1v2h-3v-2h1zM142 1.5h1v2h1v2h-3v-2h1z"/><text class="l" x="632" y="3">UniRef100_Q9XQB6</text></g>
<g class="p" transform="translate(0 1319.5)"><path class="n" d="M10 0H50M378 0H527"/><path d="M51 0H372"/><path class="s" d="M50.5-4.5v9"/><path class="a" d="M372.5-5v10l5-5z"/><path class="m" d="M82 1.5h1v2h1v2h-3v-2h1z"/><text class="l" x="632" y="3">UniRef100_B4FVT3</text></g>
<g class="p" transform="translate(0 1330.5)"><path d="M47 0H92M110 0H401"/><path class="t" d="M92 0H110"/><path class="s" d="M46.5-4.5v9"/><path class="a" d="M401.5-5v10l5-5z"/><text class="l" x="632" y="3">UniRef100_A2SY16</text></g>
<g class="g" transform="translate(0 1341.5)"><path class="n" d="M10 0H238M378 0H527"/><path d="M239 0H372"/><path class="s" d="M238.5-4.5v9"/><path class="a" d="M372.5-5v10l5-5z"/><text class="l" x="632" y="3">UniRef100_B9R7C8</text></g>
<g class="p" transform="translate(0 1352.5)"><path d="M172 0H372"/><path class="s" d="M171.5-4.5v9"/><path class="a" d="M372.5-5v10l5-5z"/><path class="m" d="M208 1.5h1v2h1v2h-3v-2h1z"/><text class="l" x="632" y="3">UniRef100_A9PGD4</text></g>
<g class="g" transform="translate(0 1363.5)"><path class="n" d="M10 0H220M378 0H527"/><path d="M221 0H372"/><path class="s" d="M220.5-4.5v9"/><path class="a" d="M372.5-5v10l5-5z"/><text class="l" x="632" y="3">UniRef100_Q9XF85</text></g>
<g class="g" transform="translate(0 1374.5)"><path d="M221 0H372"/><path class="s" d="M220.5-4.5v9"/><path class="a" d="M372.5-5v10l5-5z"/><text class="l" x="632" y="3">UniRef100_Q9C639</text></g>
<g class="g" transform="translate(0 1385.5)"><path class="n" d="M10 0H220M378 0H527"/><path d="M221 0H372"/><path class="s" d="M220.5-4.5v9"/><path class="a" d="M372.5-5v10l5-5z"/><text class="l" x="632" y="3">UniRef100_Q8L9Y7</text></g>
<g class="p" transform="translate(0 1396.5)"><path d="M47 0H81M87 0H105M110 0H372"/><path class="t" d="M81 0H87M105 0H110"/><path class="s" d="M46.5-4.5v9"/><path class="a" d="M372.5-5v10l5-5z"/><path class="m" d="M125 1.5h1v2h1v2h-3v-2h1z"/><text class="l" x="632" y="3">UniRef100_Q01JQ3</text></g>
<g class="g" transform="translate(0 1407.5)"><path class="n" d="M10 0H220M378 0H527"/><path d="M221 0H372"/><path class="s" d="M220.5-4.5v9"/><path class="a" d="M372.5-5v10l5-5z"/><text class="l" x="632" y="3">UniRef100_B9DFW4</text></g>
<g class="g" transform="translate(0 1418.5)"><path d="M196 0H201M204 0H368"/><path class="t" d="M201 0H204"/><path class="s" d="M195.5-4.5v9"/><path class="a" d="M368.5-5v10l5-5z"/><path class="m" d="M210 1.5h1v2h1v2h-3v-2h1z"/><text class="l" x="632" y="3">UniRef100_A8HPE0</text></g>
<g class="g" transform="translate(0 1429.5)"><path class="n" d="M10 0H213M378 0H527"/><path d="M214 0H372"/><path class="s" d="M213.5-4.5v9"/><path class="a" d="M372.5-5v10l5-5z"/><path class="m" d="M221 1.5h1v2h1v2h-3v-2h1zM223 1.5h1v2h1v2h-3v-2h1z"/><text class="l" x="632" y="3">UniRef100_A7NTV5</text></g>
<g class="p" transform="translate(0 1440.5)"><path d="M47 0H81M87 0H105M110 0H372"/><path class="t" d="M81 0H87M105 0H110"/><path class="s" d="M46.5-4.5v9"/><path class="a" d="M372.5-5v10l5-5z"/><path class="m" d="M125 1.5h1v2h1v2h-3v-2h1z"/><text class="l" x="632" y="3">UniRef100_Q7XV11</text></g>
<g class="p" transform="translate(0 1451.5)"><path class="n" d="M10 0H46M378 0H527"/><path d="M47 0H64M66 0H102M116 0H372"/><path class="t" d="M64 0H66M102 0H116"/><path class="s" d="M46.5-4.5v9"/><path class="a" d="M372.5-5v10l5-5z"/><path class="m" d="M60 1.5h1v2h1v2h-3v-2h1zM80 1.5h1v2h1v2h-3v-2h1zM125 1.5h1v2h1v2h-3v-2h1z"/><text class="l" x="632" y="3">UniRef100_P27525</text></g>
<g class="g" transform="translate(0 1462.5)"><path d="M211 0H379"/><path class="s" d="M210.5-4.5v9"/><path class="a" d="M379.5-5v10l5-5z"/><path class="m" d="M262 1.5h1v2h1v2h-3v-2h1z"/><text class="l" x="632" y="3">UniRef100_C5Y2I6</text></g>
<g class="g" transform="translate(0 1473.5)"><path class="n" d="M10 0H210M385 0H527"/><path d="M211 0H379"/><path class="s" d="M210.5-4.5v9"/><path class="a" d="M379.5-5v10l5-5z"/><path class="m" d="M262 1.5h1v2h1v2h-3v-2h1z"/><text class="l" x="632" y="3">UniRef100_C5XSU5</text></g>
<g class="p" transform="translate(0 1484.5)"><path d="M65 0H90M95 0H350"/><path class="t" d="M90 0H95"/><path class="s" d="M64.5-4.5v9"/><path class="a" d="M350.5-5v10l5-5z"/><path class="m" d="M121 1.5h1v2h1v2h-3v-2h1z"/><text class="l" x="632" y="3">UniRef100_B9SEZ7</text></g>
<g class="p" transform="translate(0 1495.5)"><path class="n" d="M10 0H57M378 0H527"/><path d="M58 0H82M90 0H372"/><path class="t" d="M82 0H90"/><path class="s" d="M57.5-4.5v9"/><path class="a" d="M372.5-5v10l5-5z"/><path class="m" d="M132 1.5h1v2h1v2h-3v-2h1z"/><text class="l" x="632" y="3">UniRef100_B8PYF9</text></g>
<g class="p" transform="translate(0 1506.5)"><path d="M175 0H372"/><path class="s" d="M174.5-4.5v9"/><path class="a" d="M372.5-5v10l5-5z"/><path class="m" d="M195 1.5h1v2h1v2h-3v-2h1zM210 1.5h1v2h1v2h-3v-2h1z"/><text class="l" x="632" y="3">UniRef100_Q41748</text></g>
<g class="p" transform="translate(0 1517.5)"><path class="n" d="M10 0H50M378 0H527"/><path d="M51 0H104M118 0H372"/><path class="t" d="M104 0H118"/><path class="s" d="M50.5-4.5v9"/><path class="a" d="M372.5-5v10l5-5z"/><path class="m" d="M127 1.5h1v2h1v2h-3v-2h1z"/><text class="l" x="632" y="3">UniRef100_C5YAG3</text></g>
<g class="p" transform="translate(0 1528.5)"><path d="M179 0H372"/><path class="s" d="M178.5-4.5v9"/><path class="a" d="M372.5-5v10l5-5z"/><path class="m" d="M213 1.5h1v2h1v2h-3v-2h1z"/><text class="l" x="632" y="3">UniRef100_B3VV82</text></g>
<g class="p" transform="translate(0 1539.5)"><path class="n" d="M10 0H178M378 0H527"/><path d="M179 0H372"/><path class="s" d="M178.5-4.5v9"/><path class="a" d="M372.5-5v10l5-5z"/><path class="m" d="M213 1.5h1v2h1v2h-3v-2h1z"/><text class="l" x="632" y="3">UniRef100_B3VV73</text></g>
<g class="g" transform="translate(0 1550.5)"><path d="M239 0H372"/><path class="s" d="M238.5-4.5v9"/><path class="a" d="M372.5-5v10l5-5z"/><text class="l" x="632" y="3">UniRef100_A9TPZ7</text></g>
<g class="g" transform="translate(0 1561.5)"><path class="n" d="M10 0H195M378 0H527"/><path d="M196 0H213M215 0H372"/><path class="t" d="M213 0H215"/><path class="s" d="M195.5-4.5v9"/><path class="a" d="M372.5-5v10l5-5z"/><path class="m" d="M225 1.5h1v2h1v2h-3v-2h1z"/><text class="l" x="632" y="3">UniRef100_A9RU32</text></g>
<g class="p" transform="translate(0 1572.5)"><path d="M172 0H186M189 0H372"/><path class="t" d="M186 0H189"/><path class="s" d="M171.5-4.5v9"/><path class="a" d="M372.5-5v10l5-5z"/><text class="l" x="632" y="3">UniRef100_Q1WLW1</text></g>
<g class="g" transform="translate(0 1583.5)"><path class="n" d="M10 0H238M378 0H527"/><path d="M239 0H372"/><path class="s" d="M238.5-4.5v9"/><path class="a" d="M372.5-5v10l5-5z"/><text class="l" x="632" y="3">UniRef100_A9XAM1</text></g>

<text class="l" x="12" y="1605">Large gaps:</text>
<path class="m" d="M82 1598h1v2h1v2h1v2h-5v-2h1v-2h1z"/>
<text class="l" x="105.6" y="1605">(in Query)/</text>
<rect x="155" y="1601" width="6" height="1" fill="#00c0c0"/>
<text class="l" x="199.2" y="1605">(in Subject)</text>
<rect x="438" y="1597" width="1" height="9" fill="#330"/><rect x="456" y="1597" width="1" height="9" fill="#330"/><rect x="439" y="1600" width="17" height="3" fill="#00c0c0"/>
<text class="l" x="552" y="1605">=100char.</text>
</svg>
</body></html>
